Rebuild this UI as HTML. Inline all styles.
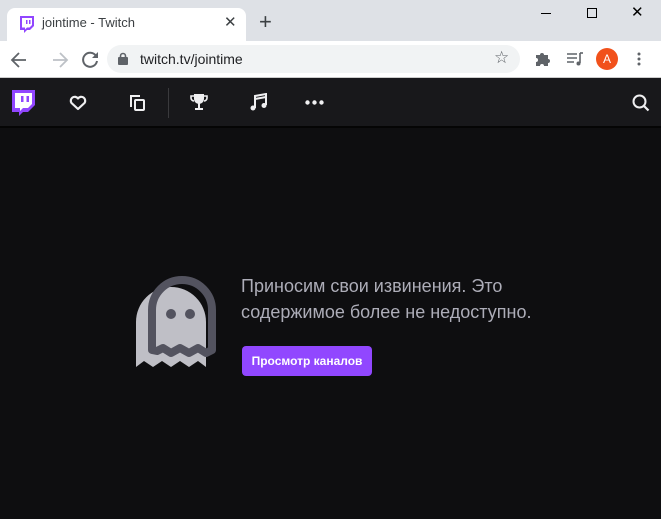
<!DOCTYPE html>
<html><head><meta charset="utf-8"><style>
*{margin:0;padding:0;box-sizing:border-box}
body{width:661px;height:519px;overflow:hidden;background:#0e0e10;font-family:"Liberation Sans",Arial,sans-serif;position:relative}
.abs{position:absolute}
</style></head><body>
<div class="abs" style="left:0;top:0;width:661px;height:41px;background:#dee1e6"></div>
<div class="abs" style="left:7px;top:8px;width:239px;height:34px;background:#fff;border-radius:8px 8px 0 0"></div>
<svg class="abs" style="left:18px;top:15px" width="17" height="18" viewBox="0 0 17 18"><path d="M2 1h14v10l-4 4h-3l-3 3v-3H2z" fill="#9146ff"/><path d="M4 3h10v7l-2.5 2.5H9L7 14.5V12.5H4z" fill="#fff"/><rect x="8" y="5" width="1.5" height="4" fill="#9146ff"/><rect x="11" y="5" width="1.5" height="4" fill="#9146ff"/></svg>
<div class="abs" style="left:42px;top:15px;font-size:13px;color:#3c4043">jointime - Twitch</div>
<div class="abs" style="left:224px;top:13px;font-size:15px;color:#3c4043">✕</div>
<div class="abs" style="left:259px;top:9px;font-size:22px;color:#3c4043">+</div>
<div class="abs" style="left:541px;top:13px;width:10px;height:1px;background:#000"></div>
<div class="abs" style="left:587px;top:8px;width:10px;height:10px;border:1px solid #000"></div>
<div class="abs" style="left:631px;top:3px;font-size:15px;color:#000">✕</div>
<div class="abs" style="left:0;top:41px;width:661px;height:37px;background:#fff;border-bottom:1px solid #ccc"></div>
<svg class="abs" style="left:10px;top:50px" width="90" height="20" viewBox="0 0 90 20"><path d="M16 10H3M9 3l-7 7 7 7" stroke="#5f6368" stroke-width="1.8" fill="none"/><path d="M43 10h13M50 3l7 7-7 7" stroke="#bdc1c6" stroke-width="1.8" fill="none"/><path d="M86 6a7 7 0 1 0 1 5" stroke="#5f6368" stroke-width="2" fill="none"/><path d="M88 2v6h-6z" fill="#5f6368"/></svg>
<div class="abs" style="left:107px;top:45px;width:413px;height:28px;background:#f1f3f4;border-radius:14px"></div>
<svg class="abs" style="left:118px;top:52px" width="10" height="13"><rect x="0" y="5" width="10" height="8" fill="#5f6368" rx="1"/><path d="M2.5 6V4a2.5 2.5 0 0 1 5 0v2" stroke="#5f6368" stroke-width="1.6" fill="none"/></svg>
<div class="abs" style="left:140px;top:51px;font-size:14px;color:#202124">twitch.tv/jointime</div>
<div class="abs" style="left:494px;top:48px;font-size:17px;color:#5f6368">☆</div>
<svg class="abs" style="left:535px;top:51px" width="16" height="16" viewBox="0 0 16 16"><path d="M1 4h4a2 2 0 0 1 4 0h4v4a2 2 0 0 1 0 4v3H9a2 2 0 0 0-4 0H1v-4a2 2 0 0 0 0-4z" fill="#5f6368"/></svg>
<svg class="abs" style="left:566px;top:51px" width="18" height="16"><path d="M1 3h10M1 7h10M1 11h7" stroke="#5f6368" stroke-width="1.6"/><path d="M14 2v10" stroke="#5f6368" stroke-width="1.6"/><circle cx="12.5" cy="12.5" r="2" fill="#5f6368"/><path d="M14 2h3" stroke="#5f6368" stroke-width="1.6"/></svg>
<div class="abs" style="left:596px;top:48px;width:22px;height:22px;border-radius:50%;background:#f1511b;color:#fff;font-size:12px;text-align:center;line-height:22px">A</div>
<svg class="abs" style="left:637px;top:52px" width="4" height="14"><circle cx="2" cy="2" r="1.5" fill="#5f6368"/><circle cx="2" cy="7" r="1.5" fill="#5f6368"/><circle cx="2" cy="12" r="1.5" fill="#5f6368"/></svg>
<div class="abs" style="left:0;top:78px;width:661px;height:50px;background:#18181b;border-bottom:2px solid #050505"></div>
<svg class="abs" style="left:10px;top:90px" width="26" height="28" viewBox="0 0 26 28"><path d="M2 0h23v15l-7 7h-5l-4 4v-4H2z" fill="#9146ff"/><path d="M5 3h17v11l-4 4h-5l-3 3v-3H5z" fill="#fff"/><rect x="11" y="6" width="2.5" height="6" fill="#9146ff"/><rect x="16.5" y="6" width="2.5" height="6" fill="#9146ff"/></svg>
<svg class="abs" style="left:69px;top:95px" width="18" height="16" viewBox="0 0 18 16"><path d="M9 14L2.5 8A3.6 3.6 0 0 1 9 3.5 3.6 3.6 0 0 1 15.5 8z" stroke="#efeff1" stroke-width="2.2" fill="none" stroke-linejoin="round"/></svg>
<svg class="abs" style="left:130px;top:94px" width="16" height="18"><path d="M1 13V2h9" stroke="#efeff1" stroke-width="2" fill="none"/><rect x="5" y="6" width="9" height="10" rx="1" stroke="#efeff1" stroke-width="2" fill="none"/></svg>
<div class="abs" style="left:168px;top:88px;width:1px;height:30px;background:#3a3a3d"></div>
<svg class="abs" style="left:190px;top:93px" width="18" height="18"><path d="M4 1h10v5a5 5 0 0 1-10 0z" fill="#efeff1"/><path d="M4 3H1v2a3 3 0 0 0 3 3M14 3h3v2a3 3 0 0 1-3 3" stroke="#efeff1" stroke-width="1.6" fill="none"/><rect x="8" y="10" width="2" height="5" fill="#efeff1"/><rect x="5" y="15" width="8" height="2" fill="#efeff1"/></svg>
<svg class="abs" style="left:250px;top:93px" width="18" height="18"><path d="M5 15V3l11-2v11" stroke="#efeff1" stroke-width="2" fill="none"/><path d="M5 6l11-2" stroke="#efeff1" stroke-width="2"/><circle cx="3" cy="15" r="2.5" fill="#efeff1"/><circle cx="14" cy="12.5" r="2.5" fill="#efeff1"/></svg>
<svg class="abs" style="left:305px;top:100px" width="19" height="5"><circle cx="2.5" cy="2.5" r="2.2" fill="#efeff1"/><circle cx="9.5" cy="2.5" r="2.2" fill="#efeff1"/><circle cx="16.5" cy="2.5" r="2.2" fill="#efeff1"/></svg>
<svg class="abs" style="left:632px;top:94px" width="18" height="18"><circle cx="7.5" cy="7.5" r="6" stroke="#efeff1" stroke-width="2" fill="none"/><path d="M12 12l4.5 4.5" stroke="#efeff1" stroke-width="2.2"/></svg>
<svg class="abs" style="left:134px;top:272px" width="86" height="98" viewBox="0 0 86 98">
<path d="M2 50a35 35 0 0 1 70 0v45l-8-6-9 6-9-6-9 6-9-6-9 6-9-6-8 6z" fill="#bfbfc6"/>
<path d="M18 78V38a30 30 0 0 1 60 0v40l-6 3-8-5-9 5-9-5-9 5-8-5-6 3z" fill="none" stroke="#53535f" stroke-width="8" stroke-linejoin="round"/>
<circle cx="37" cy="42" r="5" fill="#53535f"/><circle cx="56" cy="42" r="5" fill="#53535f"/>
</svg>
<div class="abs" style="left:241px;top:273px;font-size:18px;line-height:26px;color:#adadb8;width:320px">Приносим свои извинения. Это содержимое более не недоступно.</div>
<div class="abs" style="left:242px;top:346px;width:130px;height:30px;background:#9147ff;border-radius:4px;color:#fff;font-size:12px;font-weight:bold;text-align:center;line-height:30px">Просмотр каналов</div>
</body></html>
